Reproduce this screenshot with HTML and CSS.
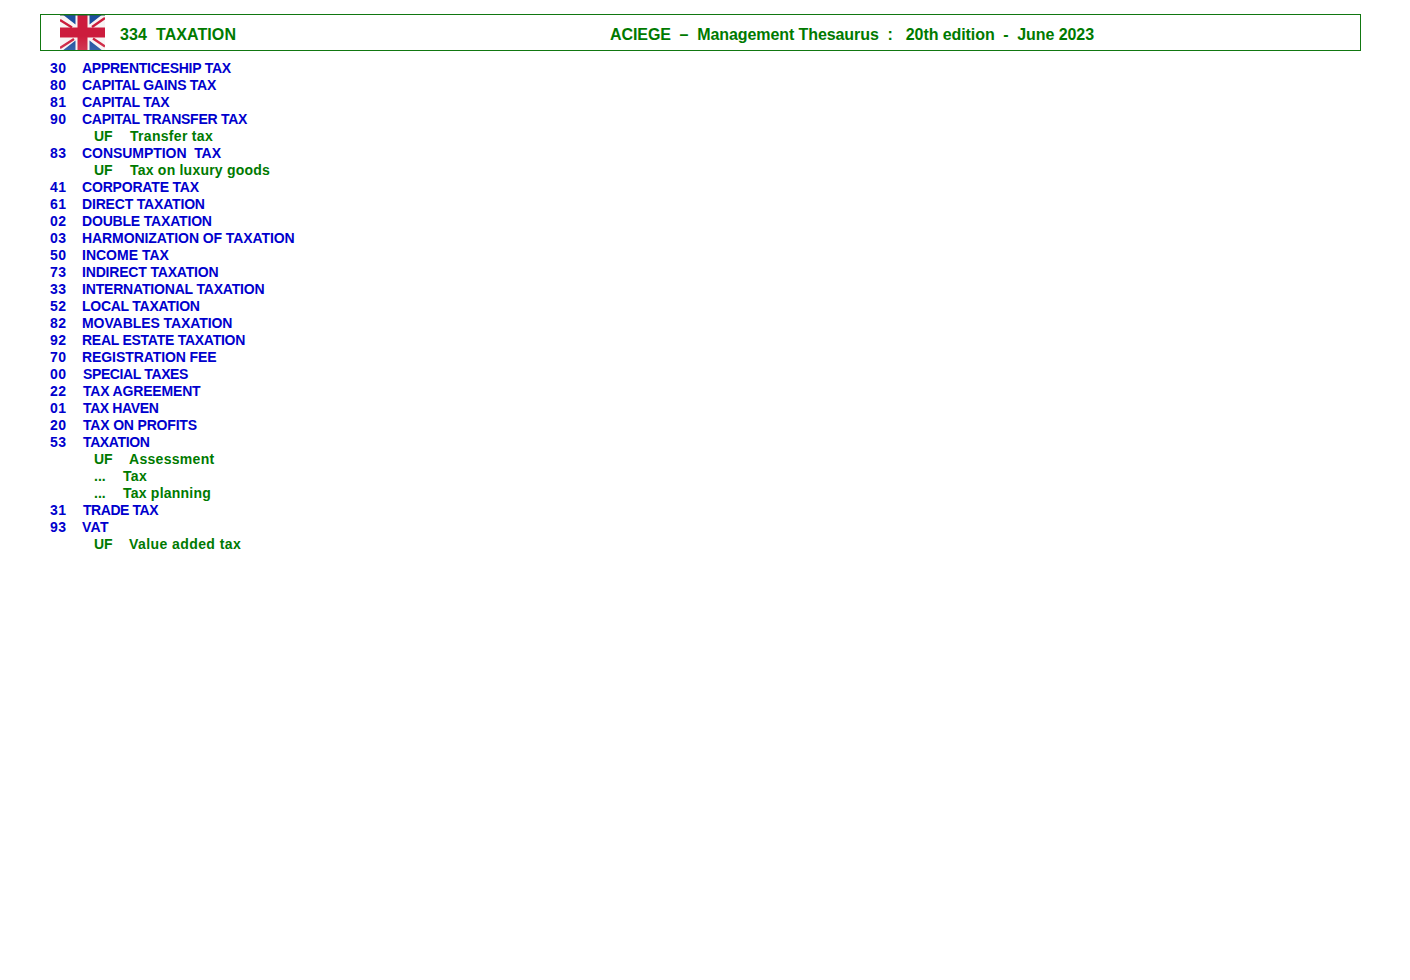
FILE: index.html
```html
<!DOCTYPE html>
<html lang="en">
<head>
<meta charset="utf-8">
<title>334 TAXATION</title>
<link rel="stylesheet" href="styles.css">
</head>
<body>
<header class="banner">
  <svg class="flag" viewBox="0 0 45 35" width="45" height="35" aria-hidden="true">
    <defs>
      <linearGradient id="sheen" x1="0" y1="0" x2="0" y2="1"><stop offset=".6" stop-color="#fff" stop-opacity="0"/><stop offset="1" stop-color="#fff" stop-opacity=".12"/></linearGradient>
      <filter id="soft" x="0" y="0" width="1" height="1"><feGaussianBlur stdDeviation=".4"/></filter>
    </defs>
    <g filter="url(#soft)">
      <rect width="45" height="35" fill="#f8f4f4"/>
      <path d="M2 -1H15.5V9.5ZM43 -1H29.5V9.5ZM2 36L15.5 25.5V36ZM43 36L29.5 25.5V36Z" fill="#1f4f9f"/>
      <path d="M0 5L12 12.5M45 3L32 12M0 33L14 24M45 31.5L33 23.5" stroke="#cc1f3c" stroke-width="2.4"/>
      <path d="M22.5 -1V36M-1 17.5H46" stroke="#cc1f3c" stroke-width="10"/>
    </g>
    <rect width="45" height="1" fill="#2b5a4a" opacity=".55"/>
    <rect width="45" height="35" fill="url(#sheen)"/>
  </svg>
  <span class="code">334&nbsp; TAXATION</span>
  <span class="edition">ACIEGE &nbsp;&ndash;&nbsp; Management Thesaurus &nbsp;:&nbsp;&nbsp; 20th edition &nbsp;-&nbsp; June 2023</span>
</header>
<main class="list">
  <div class="row"><span class="num">30</span><span class="term s3">APPRENTICESHIP TAX</span></div>
  <div class="row"><span class="num">80</span><span class="term s3">CAPITAL GAINS TAX</span></div>
  <div class="row"><span class="num">81</span><span class="term s3">CAPITAL TAX</span></div>
  <div class="row"><span class="num">90</span><span class="term s3">CAPITAL TRANSFER TAX</span></div>
  <div class="sub"><span class="tag">UF</span><span class="alt">Transfer tax</span></div>
  <div class="row"><span class="num">83</span><span class="term s0">CONSUMPTION&nbsp; TAX</span></div>
  <div class="sub"><span class="tag">UF</span><span class="alt a1">Tax on luxury goods</span></div>
  <div class="row"><span class="num">41</span><span class="term s2">CORPORATE TAX</span></div>
  <div class="row"><span class="num">61</span><span class="term s2">DIRECT TAXATION</span></div>
  <div class="row"><span class="num">02</span><span class="term s2">DOUBLE TAXATION</span></div>
  <div class="row"><span class="num">03</span><span class="term s1">HARMONIZATION OF TAXATION</span></div>
  <div class="row"><span class="num">50</span><span class="term">INCOME TAX</span></div>
  <div class="row"><span class="num">73</span><span class="term s2">INDIRECT TAXATION</span></div>
  <div class="row"><span class="num">33</span><span class="term s2">INTERNATIONAL TAXATION</span></div>
  <div class="row"><span class="num">52</span><span class="term s3">LOCAL TAXATION</span></div>
  <div class="row"><span class="num">82</span><span class="term s1">MOVABLES TAXATION</span></div>
  <div class="row"><span class="num">92</span><span class="term s3">REAL ESTATE TAXATION</span></div>
  <div class="row"><span class="num">70</span><span class="term s1">REGISTRATION FEE</span></div>
  <div class="row wide"><span class="num">00</span><span class="term s4">SPECIAL TAXES</span></div>
  <div class="row wide"><span class="num">22</span><span class="term s2">TAX AGREEMENT</span></div>
  <div class="row wide"><span class="num">01</span><span class="term s4">TAX HAVEN</span></div>
  <div class="row wide"><span class="num">20</span><span class="term s2">TAX ON PROFITS</span></div>
  <div class="row wide"><span class="num">53</span><span class="term s4">TAXATION</span></div>
  <div class="sub near"><span class="tag">UF</span><span class="alt">Assessment</span></div>
  <div class="sub dots"><span class="tag">...</span><span class="alt">Tax</span></div>
  <div class="sub dots"><span class="tag">...</span><span class="alt a1">Tax planning</span></div>
  <div class="row wide"><span class="num">31</span><span class="term s5">TRADE TAX</span></div>
  <div class="row"><span class="num">93</span><span class="term up">VAT</span></div>
  <div class="sub near"><span class="tag">UF</span><span class="alt a2">Value added tax</span></div>
</main>
</body>
</html>
```
FILE: styles.css
```css
* { box-sizing: border-box; }
html, body { margin: 0; padding: 0; background: #fff; }
body {
  padding: 14px 49px 0 40px;
  font-family: "Liberation Sans", Arial, sans-serif;
  font-weight: 700;
  font-size: 14px;
  line-height: 17px;
}
.banner {
  display: flex;
  align-items: center;
  height: 37px;
  border: 1px solid #117711;
  padding-left: 19px;
  color: #007a00;
  font-size: 16px;
  white-space: nowrap;
}
.flag { flex: none; display: block; }
.code { width: 490px; margin-left: 15px; padding-top: 3px; letter-spacing: .08px; }
.edition { padding-top: 3px; letter-spacing: -.08px; }
.list { padding: 9px 0 0 10px; }
.row, .sub { display: flex; height: 17px; white-space: nowrap; }
.row { color: #0000cd; }
.num { width: 32px; flex: none; letter-spacing: .4px; }
.wide .num { width: 33px; }
.s0 { letter-spacing: -.05px; }
.s1 { letter-spacing: -.08px; }
.s2 { letter-spacing: -.18px; }
.s3 { letter-spacing: -.26px; }
.s4 { letter-spacing: -.38px; }
.s5 { letter-spacing: -.44px; }
.up { letter-spacing: .3px; }
.sub { color: #007a00; padding-left: 44px; }
.tag { width: 36px; flex: none; }
.near .tag { width: 35px; }
.dots .tag { width: 29px; }
.alt { letter-spacing: .3px; }
.a1 { letter-spacing: .22px; }
.a2 { letter-spacing: .42px; }
```
